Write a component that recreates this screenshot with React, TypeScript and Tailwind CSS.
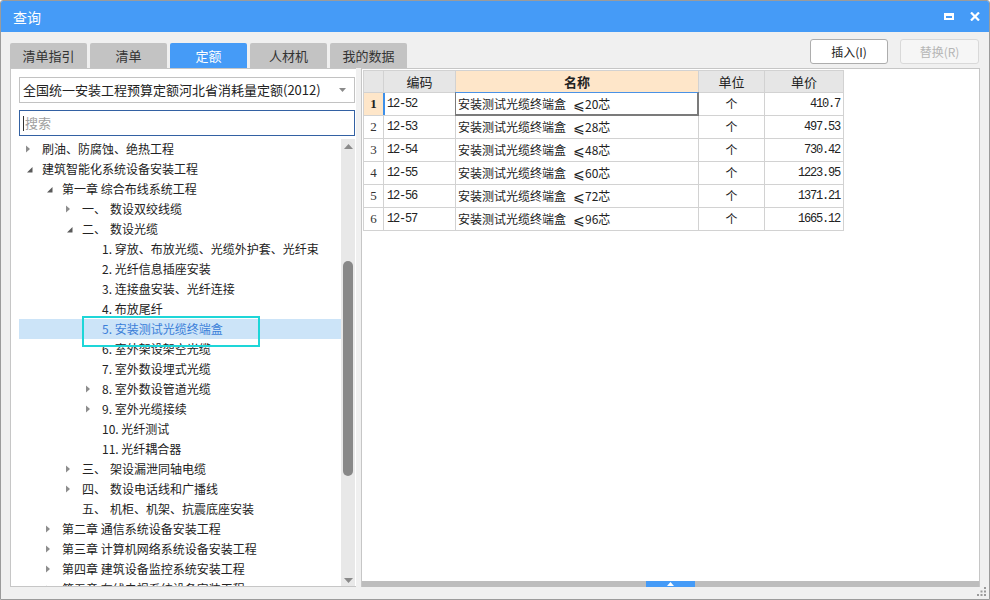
import React from "react";

const F = { fontFamily: '"Noto Sans CJK SC", "Noto Sans", sans-serif' };
const M = { fontFamily: '"Liberation Mono", "DejaVu Sans Mono", monospace' };

type Node = { l: number; a: "c" | "e" | ""; t: string; t2?: string; sel?: boolean };

const tree: Node[] = [
  { l: 0, a: "c", t: "刷油、防腐蚀、绝热工程" },
  { l: 0, a: "e", t: "建筑智能化系统设备安装工程" },
  { l: 1, a: "e", t: "第一章 综合布线系统工程" },
  { l: 2, a: "c", t: "一、", t2: "数设双绞线缆" },
  { l: 2, a: "e", t: "二、", t2: "数设光缆" },
  { l: 3, a: "", t: "1. 穿放、布放光缆、光缆外护套、光纤束" },
  { l: 3, a: "", t: "2. 光纤信息插座安装" },
  { l: 3, a: "", t: "3. 连接盘安装、光纤连接" },
  { l: 3, a: "", t: "4. 布放尾纤" },
  { l: 3, a: "", t: "5. 安装测试光缆终端盒", sel: true },
  { l: 3, a: "", t: "6. 室外架设架空光缆" },
  { l: 3, a: "", t: "7. 室外数设埋式光缆" },
  { l: 3, a: "c", t: "8. 室外数设管道光缆" },
  { l: 3, a: "c", t: "9. 室外光缆接续" },
  { l: 3, a: "", t: "10. 光纤测试" },
  { l: 3, a: "", t: "11. 光纤耦合器" },
  { l: 2, a: "c", t: "三、", t2: "架设漏泄同轴电缆" },
  { l: 2, a: "c", t: "四、", t2: "数设电话线和广播线" },
  { l: 2, a: "", t: "五、", t2: "机柜、机架、抗震底座安装" },
  { l: 1, a: "c", t: "第二章 通信系统设备安装工程" },
  { l: 1, a: "c", t: "第三章 计算机网络系统设备安装工程" },
  { l: 1, a: "c", t: "第四章 建筑设备监控系统安装工程" },
  { l: 1, a: "c", t: "第五章 有线电视系统设备安装工程" },
];

const rows = [
  ["12-52", "20", "410.7"],
  ["12-53", "28", "497.53"],
  ["12-54", "48", "730.42"],
  ["12-55", "60", "1223.95"],
  ["12-56", "72", "1371.21"],
  ["12-57", "96", "1665.12"],
];

const padL: Record<number, string> = { 0: "pl-0", 1: "pl-[20px]", 2: "pl-[40px]", 3: "pl-[60px]" };

function Arrow({ a }: { a: string }) {
  if (a === "c")
    return (
      <svg width="5" height="8" className="ml-[7px]">
        <path d="M0 0.5 L4 4 L0 7.5 Z" fill="#8d8d8d" />
      </svg>
    );
  if (a === "e")
    return (
      <svg width="6" height="6" className="ml-[8px] mt-[2px]">
        <path d="M5.5 0 L5.5 5.5 L0 5.5 Z" fill="#5a5a5a" />
      </svg>
    );
  return null;
}

export default function App() {
  return (
    <div
      className="relative w-[990px] h-[600px] border border-[#9b9b9b] rounded-t-[3px] bg-[#f0f0f0] flex flex-col overflow-hidden text-[#222]"
      style={F}
    >
      {/* title bar */}
      <div className="h-[31px] bg-[#459bf7] flex items-center pl-[12px] pr-[8px] shrink-0">
        <span className="text-white text-[14px] leading-none">查询</span>
        <div className="flex-1" />
        <div className="w-[10px] h-[7px] border-2 border-t-[3px] border-white mr-[16px]" />
        <svg width="10" height="9" viewBox="0 0 10 9" className="mr-[1px]">
          <path d="M1 0.5 L9 8.5 M9 0.5 L1 8.5" stroke="white" strokeWidth="2.2" />
        </svg>
      </div>

      {/* tabs + buttons */}
      <div className="h-[36px] flex justify-between pl-[9px] pr-[10px] shrink-0">
        <div className="flex items-end gap-[3px]">
          {["清单指引", "清单", "定额", "人材机", "我的数据"].map((t) => (
            <div
              key={t}
              className={
                "w-[77px] h-[25px] flex items-center justify-center text-[13px] rounded-t-[2px] " +
                (t === "定额" ? "bg-[#459bf7] text-white" : "bg-[#c3c3c3] text-[#333]")
              }
            >
              {t}
            </div>
          ))}
        </div>
        <div className="flex items-start gap-[12px] pt-[7px]">
          <div className="w-[78px] h-[25px] bg-white border border-[#adadad] rounded-[3px] flex items-center justify-center text-[12px] text-[#222]">
            插入(I)
          </div>
          <div className="w-[79px] h-[25px] bg-[#f6f6f6] border border-[#d9d9d9] rounded-[3px] flex items-center justify-center text-[12px] text-[#b5b5b5]">
            替换(R)
          </div>
        </div>
      </div>

      {/* content */}
      <div className="h-[519px] flex gap-[5px] pl-[9px] pr-[9px] shrink-0">
        {/* left panel */}
        <div className="w-[346px] h-full bg-white border border-r-0 border-[#c6c6c6] flex flex-col pl-[8px] pt-[8px]">
          <div className="w-[336px] h-[26px] border border-[#c2c2c2] flex items-center pl-[3px] pr-[8px] text-[13px] text-[#222] shrink-0">
            <span className="flex-1">全国统一安装工程预算定额河北省消耗量定额(2012)</span>
            <svg width="7" height="4">
              <path d="M0 0 L7 0 L3.5 4 Z" fill="#8a8a8a" />
            </svg>
          </div>
          <div className="mt-[7px] w-[336px] h-[26px] border border-[#3361a3] flex items-center pl-[3px] text-[13px] text-[#a0a0a0] shrink-0">
            <span className="w-px h-[15px] bg-[#333] mr-px" />
            搜索
          </div>
          <div className="mt-[3px] flex-1 flex min-h-0">
            <div className="w-[322px] overflow-hidden">
              {tree.map((n, i) => (
                <div
                  key={i}
                  className={
                    "h-[20px] flex items-center text-[12px] leading-[20px] whitespace-nowrap " +
                    padL[n.l] +
                    (n.sel ? " bg-[#cce4f8] text-[#3b7fd8]" : " text-[#222]")
                  }
                >
                  <div className="w-[23px] shrink-0 flex items-center">
                    <Arrow a={n.a} />
                  </div>
                  <span>{n.t}</span>
                  {n.t2 && <span className="ml-[4px]">{n.t2}</span>}
                </div>
              ))}
            </div>
            <div className="w-[14px] h-full bg-[#e8e8e8] flex flex-col items-center">
              <svg width="9" height="5" className="mt-[5px]">
                <path d="M0 5 L4.5 0 L9 5 Z" fill="#8a8a8a" />
              </svg>
              <div className="mt-[112px] w-[10px] h-[215px] rounded-full bg-[#888888]" />
              <div className="flex-1" />
              <svg width="9" height="5" className="mb-[3px]">
                <path d="M0 0 L9 0 L4.5 5 Z" fill="#8a8a8a" />
              </svg>
            </div>
          </div>
        </div>

        {/* right panel */}
        <div className="w-[619px] h-full bg-white border border-b-0 border-[#c6c6c6] flex flex-col">
          <div className="p-[1px] flex-1">
            <div className="w-fit border-l border-t border-[#d2d2d2]">
              {/* header */}
              <div className="flex h-[22px] text-[13px] text-[#222]">
                <div className="w-[20px] bg-[#e6e6e6] border-r border-b border-[#d2d2d2]" />
                <div className="w-[72px] bg-[#e6e6e6] border-r border-b border-[#d2d2d2] flex items-center justify-center">编码</div>
                <div className="w-[243px] bg-[#fee6c9] border-r border-b border-[#d2d2d2] flex items-center justify-center font-bold">名称</div>
                <div className="w-[66px] bg-[#e6e6e6] border-r border-b border-[#d2d2d2] flex items-center justify-center">单位</div>
                <div className="w-[79px] bg-[#e6e6e6] border-r border-b border-[#d2d2d2] flex items-center justify-center">单价</div>
              </div>
              {rows.map((r, i) => (
                <div key={i} className="flex h-[23px] text-[12px] text-[#222]">
                  <div
                    className={
                      "w-[20px] border-r border-b border-[#d2d2d2] flex items-center justify-center text-[13px] " +
                      (i === 0 ? "bg-[#fee6c9] font-bold text-[#222]" : "text-[#333]")
                    }
                    style={{ fontFamily: '"Liberation Serif", serif' }}
                  >
                    {i + 1}
                  </div>
                  <div className="relative w-[72px] border-r border-b border-[#d2d2d2] flex items-center pl-[3px] text-[12px] tracking-[-1.2px]" style={M}>
                    {i === 0 && <div className="absolute left-[-1px] top-0 bottom-0 w-[2px] bg-[#3d8fe9]" />}
                    {r[0]}
                  </div>
                  <div className="relative w-[243px] border-r border-b border-[#d2d2d2] flex items-center pl-[2px]">
                    {i === 0 && (
                      <div className="absolute left-[-1px] top-[-1px] right-[-1px] bottom-[-1px] border-l border-r-2 border-b-2 border-t border-[#7b7b7b] border-t-[#4a92e6]" />
                    )}
                    <span>安装测试光缆终端盒</span>
                    <span className="ml-[7px] text-[14px] leading-none">⩽</span>
                    <span>{r[1]}芯</span>
                  </div>
                  <div className="w-[66px] border-r border-b border-[#d2d2d2] flex items-center justify-center">个</div>
                  <div className="w-[79px] border-r border-b border-[#d2d2d2] flex items-center justify-end pr-[3px] text-[12px] tracking-[-1.2px]" style={M}>
                    {r[2]}
                  </div>
                </div>
              ))}
            </div>
          </div>
          <div className="h-[6px] bg-[#bdbdbd] flex shrink-0">
            <div className="ml-[284px] w-[49px] h-full bg-[#459bf7] flex items-center justify-center">
              <svg width="7" height="4">
                <path d="M0 4 L3.5 0 L7 4 Z" fill="white" />
              </svg>
            </div>
          </div>
        </div>
      </div>

      {/* annotation box */}
      <div className="absolute left-[81px] top-[315px] w-[178px] h-[31px] border-2 border-[#1ed6d8]" />

      {/* resize grip */}
      <svg width="10" height="10" className="absolute right-[2px] bottom-[2px]">
        <rect x="7" y="0" width="2" height="2" fill="#9a9a9a" />
        <rect x="3.5" y="3.5" width="2" height="2" fill="#9a9a9a" />
        <rect x="7" y="3.5" width="2" height="2" fill="#9a9a9a" />
        <rect x="0" y="7" width="2" height="2" fill="#9a9a9a" />
        <rect x="3.5" y="7" width="2" height="2" fill="#9a9a9a" />
        <rect x="7" y="7" width="2" height="2" fill="#9a9a9a" />
      </svg>
    </div>
  );
}
